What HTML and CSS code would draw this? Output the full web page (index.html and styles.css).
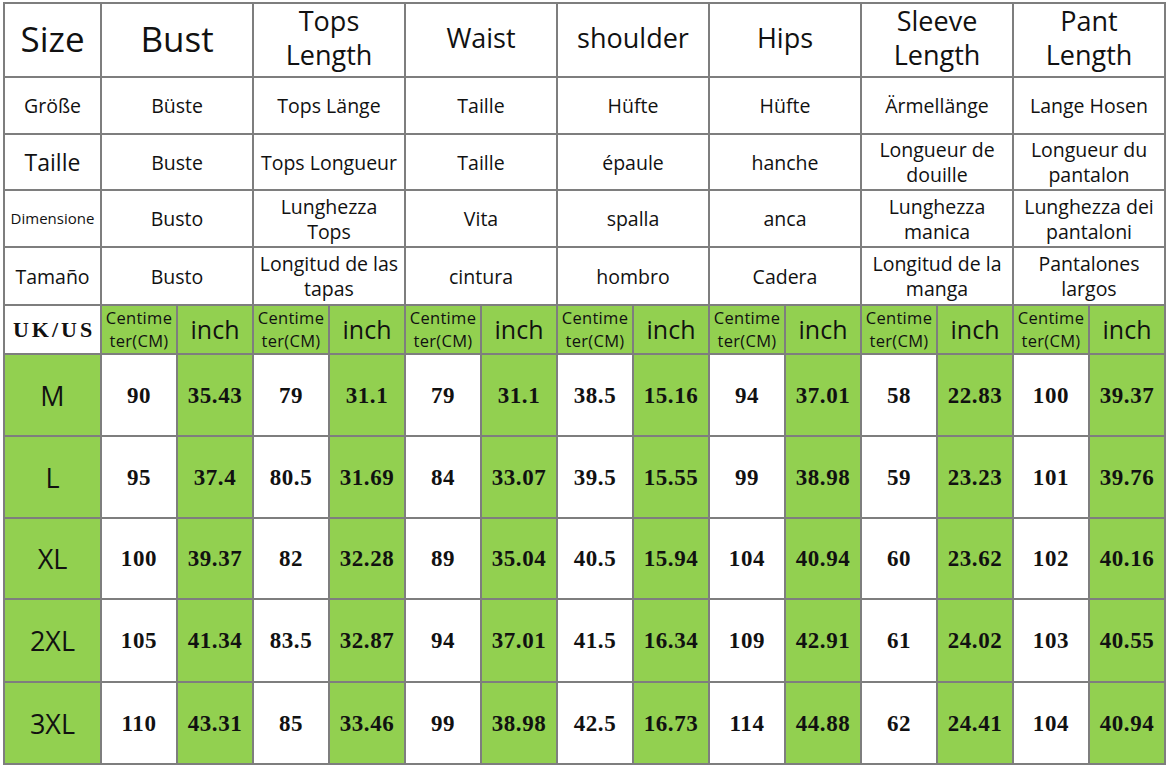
FILE: index.html
```html
<!DOCTYPE html>
<html lang="en">
<head>
<meta charset="utf-8">
<title>Size Chart</title>
<link rel="stylesheet" href="styles.css">
</head>
<body>
<div class="chart">
  <!-- Row 1: English headers -->
  <div class="cell h1 big">Size</div>
  <div class="cell h1 big span2">Bust</div>
  <div class="cell h1 span2">Tops<br>Length</div>
  <div class="cell h1 span2">Waist</div>
  <div class="cell h1 span2">shoulder</div>
  <div class="cell h1 span2">Hips</div>
  <div class="cell h1 span2">Sleeve<br>Length</div>
  <div class="cell h1 span2">Pant<br>Length</div>

  <!-- Row 2: German -->
  <div class="cell t">Größe</div>
  <div class="cell t span2">Büste</div>
  <div class="cell t span2">Tops Länge</div>
  <div class="cell t span2">Taille</div>
  <div class="cell t span2">Hüfte</div>
  <div class="cell t span2">Hüfte</div>
  <div class="cell t span2">Ärmellänge</div>
  <div class="cell t span2">Lange Hosen</div>

  <!-- Row 3: French -->
  <div class="cell t lg">Taille</div>
  <div class="cell t span2">Buste</div>
  <div class="cell t span2">Tops Longueur</div>
  <div class="cell t span2">Taille</div>
  <div class="cell t span2">épaule</div>
  <div class="cell t span2">hanche</div>
  <div class="cell t span2">Longueur de<br>douille</div>
  <div class="cell t span2">Longueur du<br>pantalon</div>

  <!-- Row 4: Italian -->
  <div class="cell t sm">Dimensione</div>
  <div class="cell t span2">Busto</div>
  <div class="cell t span2">Lunghezza<br>Tops</div>
  <div class="cell t span2">Vita</div>
  <div class="cell t span2">spalla</div>
  <div class="cell t span2">anca</div>
  <div class="cell t span2">Lunghezza<br>manica</div>
  <div class="cell t span2">Lunghezza dei<br>pantaloni</div>

  <!-- Row 5: Spanish -->
  <div class="cell t">Tamaño</div>
  <div class="cell t span2">Busto</div>
  <div class="cell t span2">Longitud de las<br>tapas</div>
  <div class="cell t span2">cintura</div>
  <div class="cell t span2">hombro</div>
  <div class="cell t span2">Cadera</div>
  <div class="cell t span2">Longitud de la<br>manga</div>
  <div class="cell t span2">Pantalones<br>largos</div>

  <!-- Row 6: units -->
  <div class="cell ukus">UK/US</div>
  <div class="cell green cm">Centime<br>ter(CM)</div><div class="cell green inch">inch</div>
  <div class="cell green cm">Centime<br>ter(CM)</div><div class="cell green inch">inch</div>
  <div class="cell green cm">Centime<br>ter(CM)</div><div class="cell green inch">inch</div>
  <div class="cell green cm">Centime<br>ter(CM)</div><div class="cell green inch">inch</div>
  <div class="cell green cm">Centime<br>ter(CM)</div><div class="cell green inch">inch</div>
  <div class="cell green cm">Centime<br>ter(CM)</div><div class="cell green inch">inch</div>
  <div class="cell green cm">Centime<br>ter(CM)</div><div class="cell green inch">inch</div>

  <!-- M -->
  <div class="cell green size">M</div>
  <div class="cell num">90</div><div class="cell num green">35.43</div>
  <div class="cell num">79</div><div class="cell num green">31.1</div>
  <div class="cell num">79</div><div class="cell num green">31.1</div>
  <div class="cell num">38.5</div><div class="cell num green">15.16</div>
  <div class="cell num">94</div><div class="cell num green">37.01</div>
  <div class="cell num">58</div><div class="cell num green">22.83</div>
  <div class="cell num">100</div><div class="cell num green">39.37</div>

  <!-- L -->
  <div class="cell green size">L</div>
  <div class="cell num">95</div><div class="cell num green">37.4</div>
  <div class="cell num">80.5</div><div class="cell num green">31.69</div>
  <div class="cell num">84</div><div class="cell num green">33.07</div>
  <div class="cell num">39.5</div><div class="cell num green">15.55</div>
  <div class="cell num">99</div><div class="cell num green">38.98</div>
  <div class="cell num">59</div><div class="cell num green">23.23</div>
  <div class="cell num">101</div><div class="cell num green">39.76</div>

  <!-- XL -->
  <div class="cell green size">XL</div>
  <div class="cell num">100</div><div class="cell num green">39.37</div>
  <div class="cell num">82</div><div class="cell num green">32.28</div>
  <div class="cell num">89</div><div class="cell num green">35.04</div>
  <div class="cell num">40.5</div><div class="cell num green">15.94</div>
  <div class="cell num">104</div><div class="cell num green">40.94</div>
  <div class="cell num">60</div><div class="cell num green">23.62</div>
  <div class="cell num">102</div><div class="cell num green">40.16</div>

  <!-- 2XL -->
  <div class="cell green size">2XL</div>
  <div class="cell num">105</div><div class="cell num green">41.34</div>
  <div class="cell num">83.5</div><div class="cell num green">32.87</div>
  <div class="cell num">94</div><div class="cell num green">37.01</div>
  <div class="cell num">41.5</div><div class="cell num green">16.34</div>
  <div class="cell num">109</div><div class="cell num green">42.91</div>
  <div class="cell num">61</div><div class="cell num green">24.02</div>
  <div class="cell num">103</div><div class="cell num green">40.55</div>

  <!-- 3XL -->
  <div class="cell green size">3XL</div>
  <div class="cell num">110</div><div class="cell num green">43.31</div>
  <div class="cell num">85</div><div class="cell num green">33.46</div>
  <div class="cell num">99</div><div class="cell num green">38.98</div>
  <div class="cell num">42.5</div><div class="cell num green">16.73</div>
  <div class="cell num">114</div><div class="cell num green">44.88</div>
  <div class="cell num">62</div><div class="cell num green">24.41</div>
  <div class="cell num">104</div><div class="cell num green">40.94</div>
</div>
</body>
</html>
```

FILE: styles.css
```css
html, body {
  margin: 0;
  padding: 0;
  background: #ffffff;
}

body {
  padding: 2px 0 0 3px;
  font-family: "Open Sans", "Noto Sans", sans-serif;
  color: #111111;
}

.chart {
  display: grid;
  grid-template-columns: 95px repeat(14, 74px);
  grid-template-rows: 72px 55px 54px 55px 56px 47px 80px 80px 79px 81px 80px;
  gap: 2px;
  width: max-content;
  background: #7e7e7e;
  border: 2px solid #7e7e7e;
}

.cell {
  background: #ffffff;
  display: flex;
  align-items: center;
  justify-content: center;
  text-align: center;
  font-size: 19.5px;
  line-height: 25px;
  white-space: nowrap;
}

.span2 {
  grid-column: span 2;
}

.h1 {
  font-size: 27px;
  line-height: 34px;
  padding-bottom: 4px;
}

.h1.big {
  font-size: 35px;
  line-height: 40px;
  padding-bottom: 3px;
}

.t.lg {
  font-size: 23px;
}

.t.sm {
  font-size: 15px;
}

.green {
  background: #92d050;
}

.ukus {
  font-family: "Liberation Serif", "Times New Roman", serif;
  font-weight: bold;
  font-size: 22px;
  letter-spacing: 3px;
  padding-left: 3px;
}

.cm {
  font-size: 16.5px;
  line-height: 22.5px;
  letter-spacing: 0.3px;
}

.inch {
  font-size: 25px;
}

.size {
  font-size: 27px;
}

.num {
  font-family: "Liberation Serif", "Times New Roman", serif;
  font-weight: bold;
  font-size: 23px;
  letter-spacing: 0.6px;
}
```
